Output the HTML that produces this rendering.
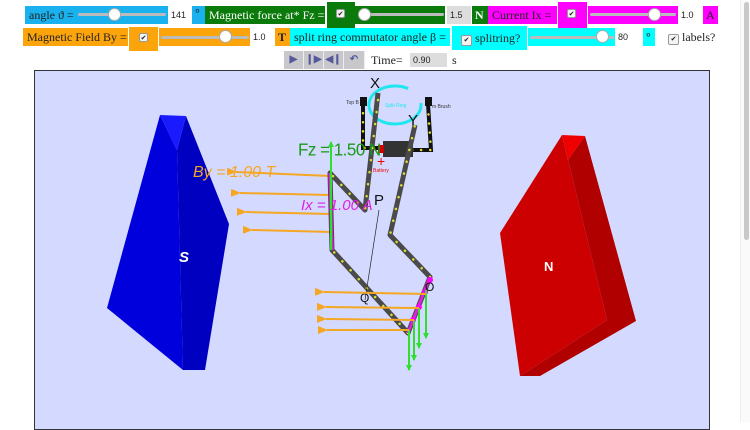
<!DOCTYPE html>
<html><head><meta charset="utf-8"><style>
body{margin:0;width:750px;height:422px;background:#fff;position:relative;overflow:hidden;font-family:"Liberation Serif",serif;font-size:12px;color:#222}
.a{position:absolute;box-sizing:border-box}
.lbl{padding:2px 4px;line-height:15px;white-space:nowrap}
.inp{background:#fff;font:9px "Liberation Sans",sans-serif;line-height:18px;padding-left:3px}
.cb{width:9px;height:9px;background:#f4f4f4;border:1px solid #999;border-radius:2px;font-size:7px;line-height:8px;text-align:center;color:#222}
.tr{height:3px;background:#bbb;border-radius:2px}
.th{width:13px;height:13px;border-radius:50%;background:#fff;border:1px solid #aaa}
.btn{background:#c8c8cc;border-right:1px solid #eee;color:#55589a;text-align:center;font:bold 10px "Liberation Sans",sans-serif;line-height:18px}
</style></head><body>
<!-- row 1 -->
<div class="a lbl" style="left:25px;top:6px;width:143px;height:18px;background:#1ab2ee">angle ϑ =</div>
<div class="a tr" style="left:78px;top:13px;width:88px"></div><div class="a th" style="left:108px;top:8px"></div>
<div class="a inp" style="left:168px;top:6px;width:24px;height:18px">141</div>
<div class="a lbl" style="left:192px;top:6px;width:13px;height:18px;background:#1ab2ee;font-weight:bold;padding:0 3px">°</div>
<div class="a lbl" style="left:205px;top:6px;width:120px;height:18px;background:#0a7a0a;color:#fff">Magnetic force at* Fz =</div>
<div class="a" style="left:327px;top:2px;width:28px;height:26px;background:#0a7a0a"></div>
<div class="a cb" style="left:336px;top:9px">✔</div>
<div class="a" style="left:355px;top:6px;width:90px;height:18px;background:#0a7a0a"></div>
<div class="a tr" style="left:358px;top:13px;width:86px"></div><div class="a th" style="left:358px;top:8px"></div>
<div class="a inp" style="left:447px;top:6px;width:24px;height:18px;background:#ddd">1.5</div>
<div class="a lbl" style="left:472px;top:6px;width:16px;height:18px;background:#0a7a0a;color:#fff;font-weight:bold;padding:2px 3px">N</div>
<div class="a lbl" style="left:488px;top:6px;width:69px;height:18px;background:#f0f">Current Ix =</div>
<div class="a" style="left:558px;top:2px;width:29px;height:26px;background:#f0f"></div>
<div class="a cb" style="left:567px;top:9px">✔</div>
<div class="a" style="left:588px;top:6px;width:90px;height:18px;background:#f0f"></div>
<div class="a tr" style="left:590px;top:13px;width:86px"></div><div class="a th" style="left:648px;top:8px"></div>
<div class="a inp" style="left:678px;top:6px;width:24px;height:18px">1.0</div>
<div class="a lbl" style="left:703px;top:6px;width:15px;height:18px;background:#f0f;padding:2px 3px">A</div>
<!-- row 2 -->
<div class="a lbl" style="left:23px;top:28px;width:105px;height:18px;background:#fca40c">Magnetic Field By =</div>
<div class="a" style="left:129px;top:27px;width:29px;height:24px;background:#fca40c"></div>
<div class="a cb" style="left:139px;top:33px">✔</div>
<div class="a" style="left:159px;top:28px;width:91px;height:18px;background:#fca40c"></div>
<div class="a tr" style="left:161px;top:36px;width:88px"></div><div class="a th" style="left:219px;top:30px"></div>
<div class="a inp" style="left:250px;top:28px;width:25px;height:18px">1.0</div>
<div class="a lbl" style="left:275px;top:28px;width:15px;height:18px;background:#fca40c;font-weight:bold;padding:2px 3px">T</div>
<div class="a lbl" style="left:290px;top:28px;width:160px;height:18px;background:#0ff">split ring commutator angle β =</div>
<div class="a lbl" style="left:452px;top:26px;width:75px;height:24px;background:#0ff;padding:5px 4px 2px 9px"><span class="cb" style="display:inline-block;position:relative;top:0">✔</span> splitring?</div>
<div class="a" style="left:528px;top:28px;width:87px;height:18px;background:#0ff"></div>
<div class="a tr" style="left:530px;top:36px;width:84px"></div><div class="a th" style="left:596px;top:30px"></div>
<div class="a inp" style="left:615px;top:28px;width:28px;height:18px">80</div>
<div class="a lbl" style="left:643px;top:28px;width:12px;height:18px;background:#0ff;padding:2px 3px;font-weight:bold">°</div>
<div class="a lbl" style="left:664px;top:28px;height:18px"><span class="cb" style="display:inline-block">✔</span> labels?</div>
<!-- row 3 -->
<div class="a btn" style="left:284px;top:51px;width:20px;height:18px">▶</div>
<div class="a btn" style="left:304px;top:51px;width:20px;height:18px">❙▶</div>
<div class="a btn" style="left:324px;top:51px;width:20px;height:18px">◀❙</div>
<div class="a btn" style="left:344px;top:51px;width:21px;height:18px">↶</div>
<div class="a" style="left:371px;top:53px;font-size:12px">Time=</div>
<div class="a inp" style="left:410px;top:53px;width:37px;height:14px;background:#ddd;line-height:14px">0.90</div>
<div class="a" style="left:452px;top:53px">s</div>
<!-- scrollbar -->
<div class="a" style="left:740px;top:0;width:10px;height:422px;background:#fafafa;border-left:1px solid #eee"></div>
<div class="a" style="left:744px;top:2px;width:5px;height:238px;background:#c8c8c8;border-radius:3px"></div>
<!-- canvas -->
<div class="a" style="left:34px;top:70px;width:676px;height:360px;background:#d4daff;border:1px solid #333"></div>
<svg class="a" style="left:0;top:0" width="750" height="422" font-family="Liberation Sans,sans-serif">
<defs><marker id="ao" markerUnits="userSpaceOnUse" markerWidth="10" markerHeight="8" refX="1" refY="4" orient="auto"><path d="M10,0L0,4L10,8z" fill="#f5a623"/></marker>
<marker id="ag" markerUnits="userSpaceOnUse" markerWidth="6" markerHeight="8" refX="5" refY="3" orient="auto"><path d="M0,0L6,3L0,6z" fill="#2ee02e"/></marker></defs>
<!-- S magnet -->
<polygon points="177,150 186,116 229,224 205,370 183,370" fill="#0000c0"/>
<polygon points="160,115 177,150 183,370 107,308" fill="#0000dd"/>
<polygon points="160,115 186,116 177,150" fill="#1a1aff"/>
<text x="179" y="262" fill="#fff" font-size="15" font-style="italic" font-weight="bold">S</text>
<!-- N magnet -->
<polygon points="568,160 585,136 636,321 540,376 520,376 607,320" fill="#b00000"/>
<polygon points="500,233 562,135 568,160 607,320 520,376" fill="#cc0000"/>
<polygon points="562,135 585,136 568,160" fill="#ee0000"/>
<text x="544" y="271" fill="#fff" font-size="13" font-weight="bold">N</text>
<!-- orange arrows upper -->
<g stroke="#f5a623" stroke-width="2" marker-end="url(#ao)">
<line x1="330" y1="176" x2="236" y2="172"/><line x1="330" y1="195" x2="240" y2="193"/>
<line x1="330" y1="214" x2="246" y2="212"/><line x1="332" y1="232" x2="252" y2="230"/>
</g>
<!-- split ring -->
<ellipse cx="395" cy="105" rx="26" ry="19" fill="none" stroke="#1ee6f0" stroke-width="3" stroke-dasharray="120 20"/>
<text x="385" y="107" fill="#1ee6f0" font-size="5">Split Ring</text>
<text x="346" y="104" fill="#333" font-size="5">Top B</text><text x="432" y="108" fill="#333" font-size="5">m Brush</text>
<!-- brushes -->
<g stroke="#111" stroke-width="4" fill="none">
<polyline points="363,100 363,148 381,148"/><polyline points="412,150 431,150 428,104"/>
</g>
<g stroke="#dd3" stroke-width="2.5" fill="none" stroke-linecap="round" stroke-dasharray="0.1 9">
<polyline points="363,104 363,148 381,148"/><polyline points="412,150 431,150 428,108"/>
</g>
<rect x="360" y="97" width="7" height="9" fill="#111"/><rect x="425" y="97" width="7" height="9" fill="#111"/>
<rect x="383" y="141" width="30" height="16" fill="#333"/>
<rect x="378" y="145" width="6" height="8" fill="#c00"/>
<text x="377" y="166" fill="#e00" font-size="14">+</text><text x="373" y="172" fill="#e00" font-size="5">Battery</text>
<!-- wire -->
<polyline points="378,93 365,210 330,173 332,250 408,333 430,277 390,235 415,125" stroke="#4a4a4a" stroke-width="5" fill="none" stroke-linejoin="round"/>
<polyline points="378,100 365,210 330,173 332,250 408,333 430,277 390,235 415,125" stroke="#dd3" stroke-width="2.5" fill="none" stroke-linecap="round" stroke-dasharray="0.1 12"/>
<line x1="330" y1="173" x2="332" y2="250" stroke="#e020e0" stroke-width="3"/>
<line x1="430" y1="277" x2="408" y2="333" stroke="#e020e0" stroke-width="3"/>
<g fill="#f0f"><circle cx="430" cy="280" r="3"/><circle cx="425" cy="292" r="3"/><circle cx="419" cy="307" r="3"/><circle cx="413" cy="320" r="3"/></g>
<line x1="379" y1="210" x2="365" y2="300" stroke="#222" stroke-width="0.7"/>
<text x="370" y="88" font-size="15" fill="#111">X</text><text x="408" y="125" font-size="15" fill="#111">Y</text>
<text x="374" y="205" font-size="15" fill="#111">P</text><text x="360" y="302" font-size="12" fill="#111">Q</text>
<text x="425" y="291" font-size="12" fill="#111">O</text>
<!-- green arrows -->
<g stroke="#2ee02e" stroke-width="2" marker-end="url(#ag)">
<line x1="331" y1="250" x2="331" y2="142"/>
<line x1="426" y1="290" x2="426" y2="338"/><line x1="419" y1="308" x2="419" y2="348"/>
<line x1="414" y1="320" x2="414" y2="360"/><line x1="409" y1="330" x2="409" y2="370"/>
</g>
<!-- lower orange -->
<g stroke="#f5a623" stroke-width="2" marker-end="url(#ao)">
<line x1="426" y1="294" x2="324" y2="292"/><line x1="419" y1="308" x2="326" y2="307"/>
<line x1="414" y1="320" x2="326" y2="319"/><line x1="409" y1="330" x2="327" y2="330"/>
</g>
<text x="298" y="148" fill="#1a9a1a" font-size="17" transform="scale(1,1.05)" style="letter-spacing:-0.5px">Fz = 1.50 N</text>
<text x="193" y="177" fill="#f5a623" font-size="16" font-style="italic">By = 1.00 T</text>
<text x="301" y="210" fill="#e020e0" font-size="15" font-style="italic">Ix = 1.00 A</text>
</svg>
</body></html>
